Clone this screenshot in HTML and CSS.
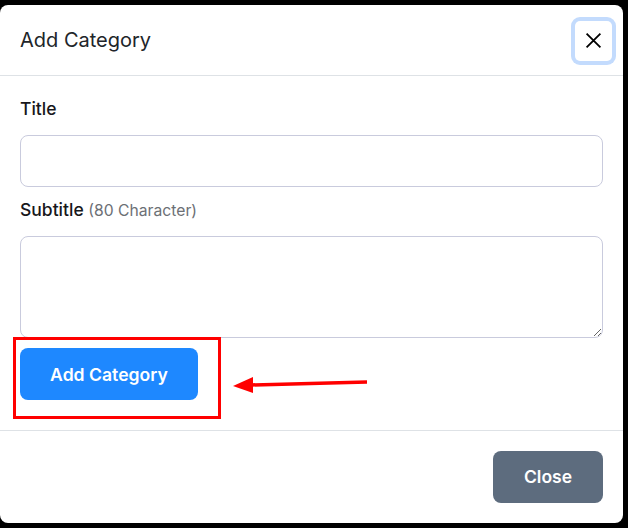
FILE: index.html
```html
<!DOCTYPE html>
<html>
<head>
<meta charset="utf-8">
<link rel="stylesheet" href="styles.css">
</head>
<body>
<div class="modal">
  <div class="modal-header">
    <h5 class="modal-title">Add Category</h5>
    <button class="btn-close" aria-label="Close">
      <svg width="17" height="17" viewBox="0 0 16 16"><path d="M1.5 1.5 L14.5 14.5 M14.5 1.5 L1.5 14.5" stroke="#000" stroke-width="1.7" fill="none"/></svg>
    </button>
  </div>
  <div class="modal-body">
    <div class="field">
      <label class="label">Title</label>
      <input class="input" type="text">
    </div>
    <div class="field">
      <label class="label">Subtitle <span class="hint">(80 Character)</span></label>
      <textarea class="textarea"></textarea>
    </div>
    <button class="btn-primary">Add Category</button>
  </div>
  <div class="modal-footer">
    <button class="btn-secondary">Close</button>
  </div>
  <div class="highlight"></div>
  <svg class="arrow" width="140" height="20" viewBox="0 0 140 20">
    <path d="M134 6 L18 9" stroke="#f00" stroke-width="3.5" fill="none"/>
    <polygon points="0,10 20,1 20,17" fill="#f00"/>
  </svg>
</div>
</body>
</html>
```

FILE: styles.css
```css
* { box-sizing: border-box; }
html, body { margin: 0; padding: 0; background: #000; }
body {
  padding-top: 5px;
  font-family: Inter, "Noto Sans", sans-serif;
  color: #212529;
  width: 628px;
  height: 528px;
  overflow: hidden;
}
.modal {
  position: relative;
  width: 623px;
  height: 518px;
  background: #fff;
  border-radius: 8px;
  display: flex;
  flex-direction: column;
}
.modal-header {
  height: 71px;
  display: flex;
  align-items: center;
  justify-content: space-between;
  padding: 0 11px 0 20px;
  border-bottom: 1px solid #dee2e6;
}
.modal-title {
  margin: 0;
  font-size: 20px;
  font-weight: 400;
  line-height: 30px;
  color: #212529;
}
.btn-close {
  width: 37px;
  height: 40px;
  margin-top: 1px;
  border: 0;
  background: #fff;
  border-radius: 5px;
  box-shadow: 0 0 0 4px #c3dbfd;
  display: flex;
  align-items: center;
  justify-content: center;
  padding: 0;
}
.modal-body {
  padding: 20px 20px 30px 20px;
  border-bottom: 1px solid #dee2e6;
}
.field { margin-bottom: 10px; }
.label {
  display: block;
  height: 26px;
  font-size: 17.5px;
  font-weight: 500;
  line-height: 26px;
  margin-bottom: 13px;
  color: #17171b;
}
.hint { font-size: 15.7px; font-weight: 400; color: #6c6f75; }
.input, .textarea {
  display: block;
  width: 100%;
  margin: 0;
  border: 1px solid #c9cbdd;
  border-radius: 8px;
  background: #fff;
  font-family: inherit;
  font-size: 16px;
}
.input { height: 52px; }
.textarea { height: 102px; resize: vertical; }
.btn-primary {
  display: block;
  height: 52px;
  width: 178px;
  border: 0;
  border-radius: 8px;
  background: #1e88ff;
  color: #fff;
  font-family: inherit;
  font-weight: 600;
  font-size: 17.6px;
}
.modal-footer {
  flex: 1;
  display: flex;
  justify-content: flex-end;
  align-items: flex-start;
  padding: 20px 20px 0 20px;
}
.btn-secondary {
  height: 52px;
  width: 110px;
  border: 0;
  border-radius: 8px;
  background: #5d6c7e;
  color: #fff;
  font-family: inherit;
  font-weight: 600;
  font-size: 17.5px;
  padding-bottom: 2px;
}
.highlight {
  position: absolute;
  left: 13px;
  top: 332px;
  width: 208px;
  height: 82px;
  border: 3.5px solid #f00;
}
.arrow {
  position: absolute;
  left: 233px;
  top: 371px;
}
```
